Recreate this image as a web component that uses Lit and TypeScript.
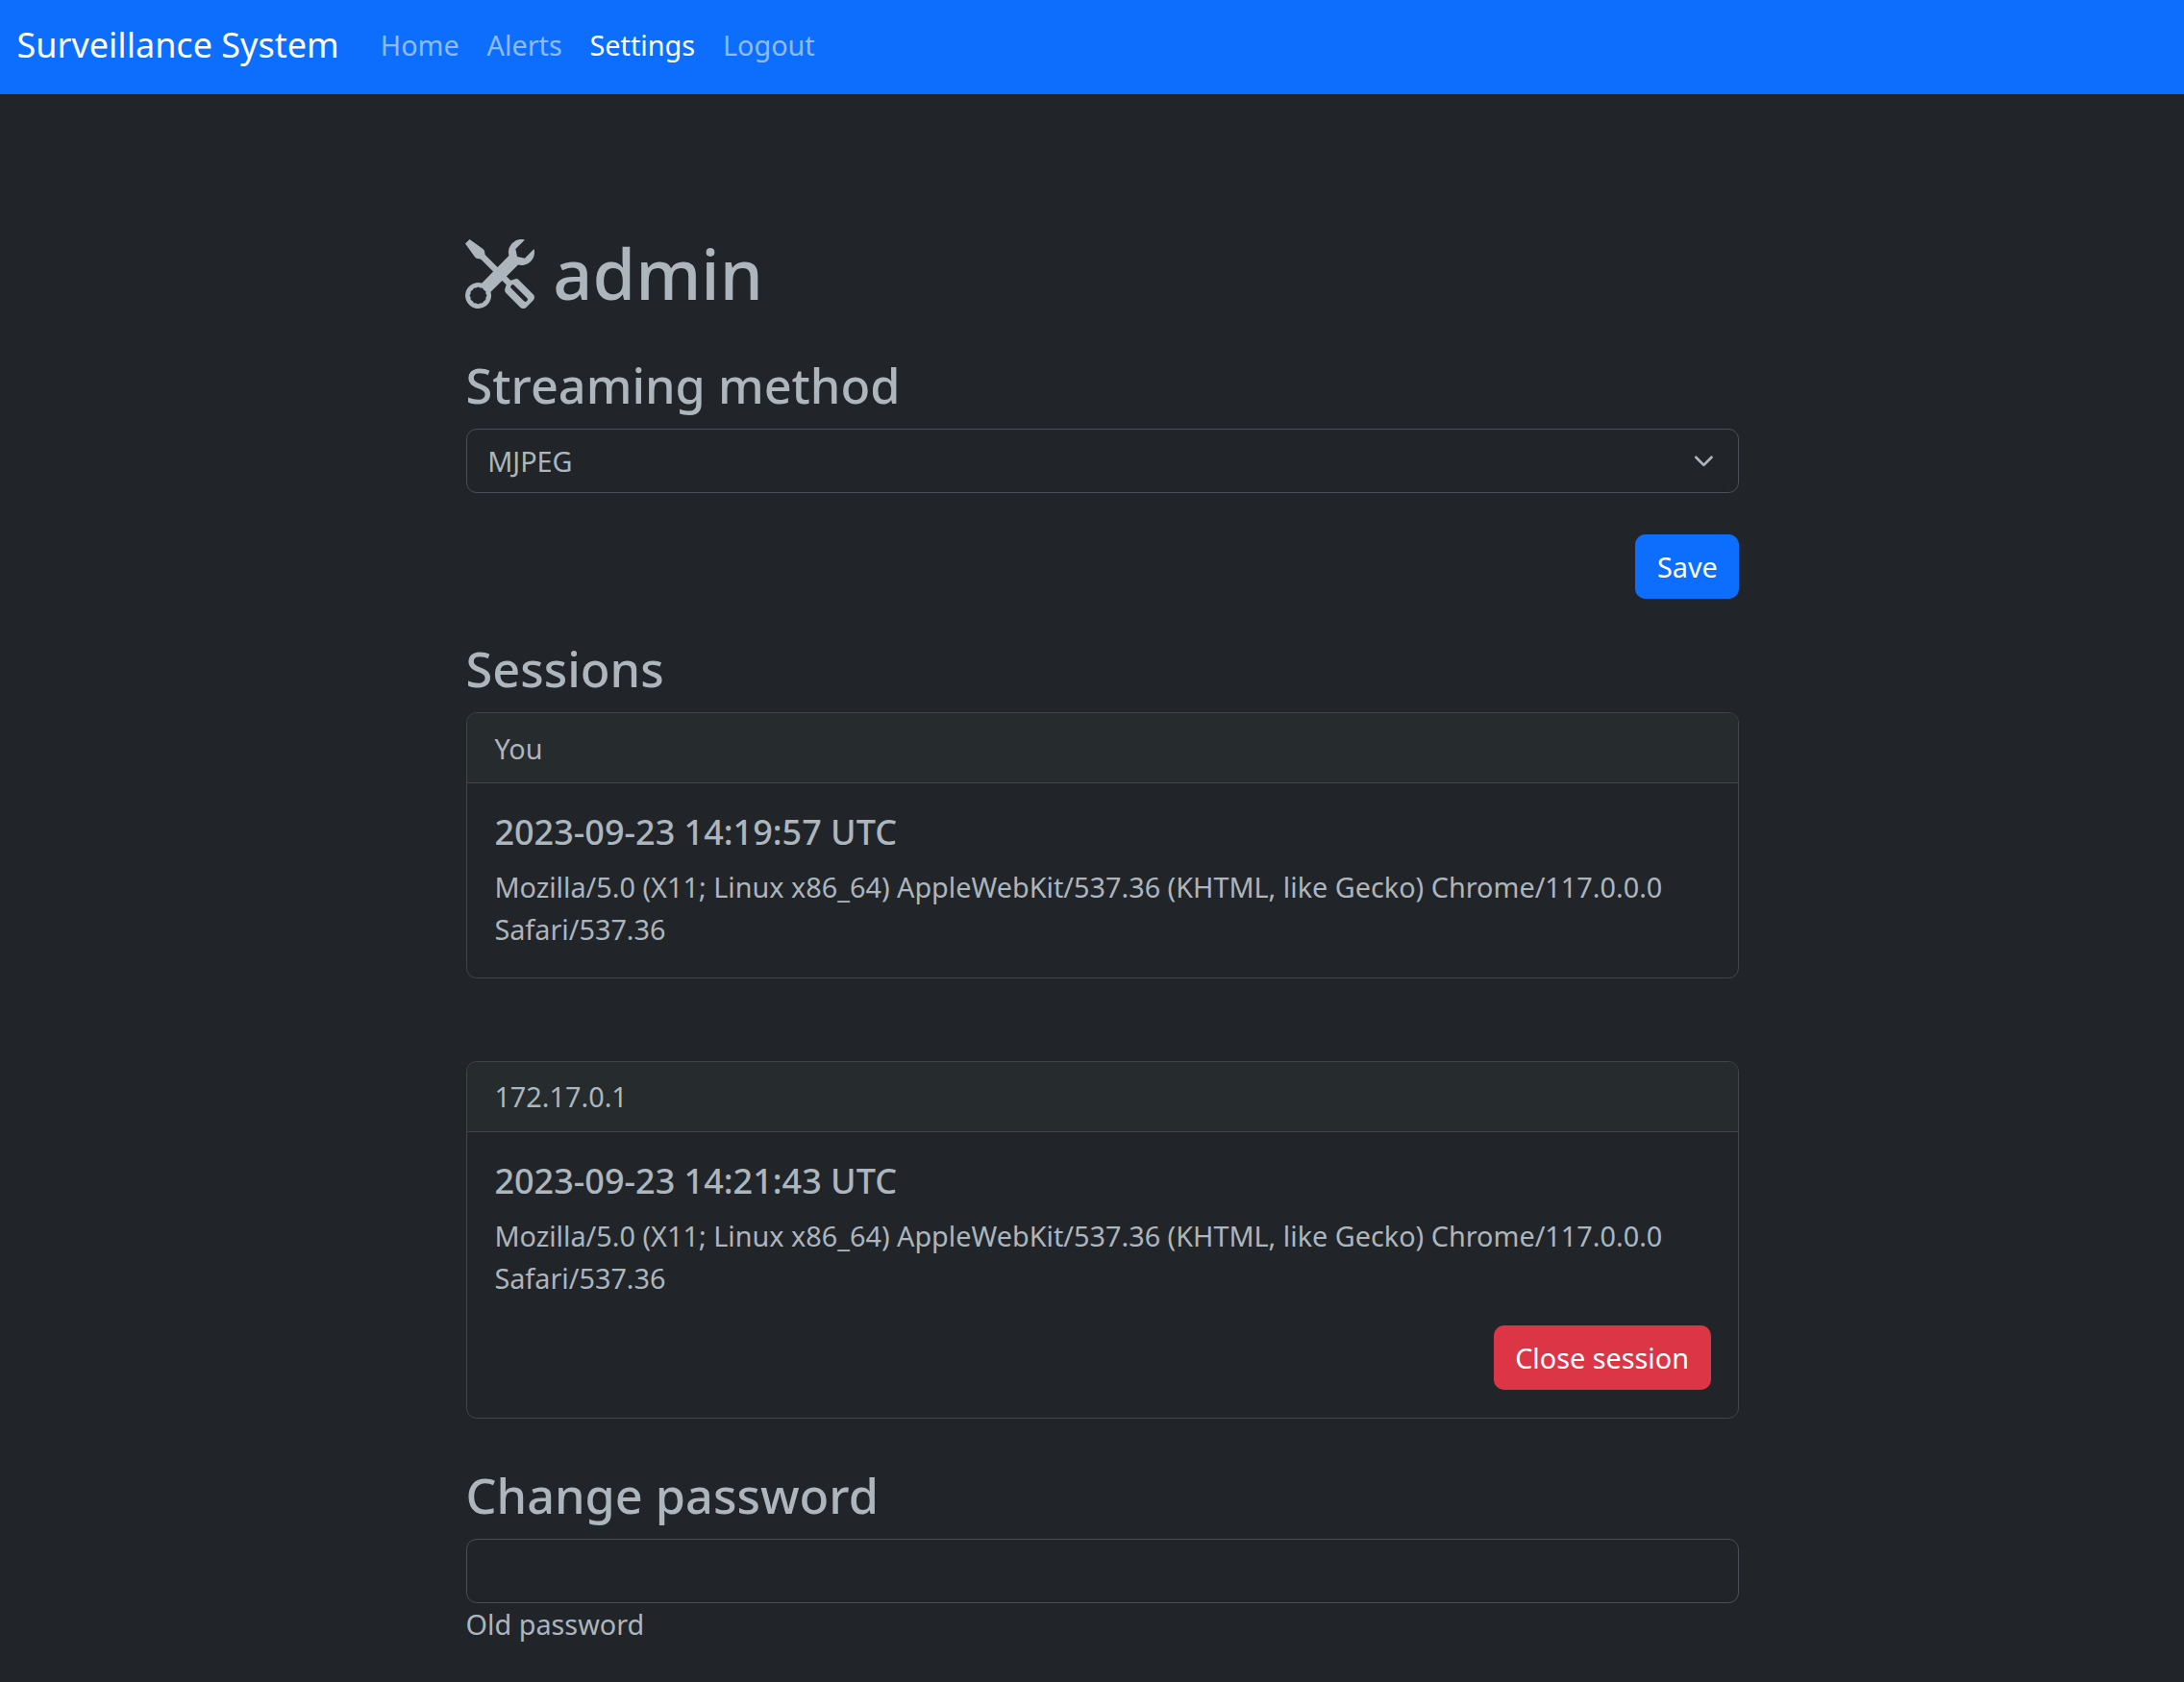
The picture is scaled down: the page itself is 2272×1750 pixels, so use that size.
import { LitElement, html, css, nothing } from "lit";
import { customElement, property } from "lit/decorators.js";

const shared = css`
  * { box-sizing: border-box; }
  .btn {
    border: 1px solid transparent;
    border-radius: 10.8px;
    padding: 10.8px 21.6px;
    font: inherit;
    line-height: 43.2px;
    color: #fff;
    display: block;
  }
  .primary { background: #0d6efd; }
  .danger { background: #dc3545; }
  .actions { display: flex; justify-content: flex-end; }
`;

@customElement("session-card")
class SessionCard extends LitElement {
  @property() origin = "";
  @property() started = "";
  @property() agent = "";
  @property({ type: Boolean }) closable = false;

  static styles = [shared, css`
    :host { display: block; }
    .card {
      border: 1px solid #424649;
      border-radius: 10.8px;
      overflow: hidden;
    }
    .head {
      padding: 14.4px 28.8px;
      background: #262b2e;
      border-bottom: 1px solid #424649;
    }
    .body { padding: 28.8px; }
    .title {
      margin: 0 0 14.4px;
      font-size: 36px;
      font-weight: 500;
      line-height: 1.2;
    }
    .text { margin: 0; }
    .actions { margin-top: 28.2px; }
  `];

  render() {
    return html`
      <div class="card">
        <div class="head">${this.origin}</div>
        <div class="body">
          <h5 class="title">${this.started}</h5>
          <p class="text">${this.agent}</p>
          ${this.closable
            ? html`<div class="actions"><button class="btn danger">Close session</button></div>`
            : nothing}
        </div>
      </div>`;
  }
}

@customElement("app-root")
class AppRoot extends LitElement {
  static styles = [shared, css`
    :host {
      display: block;
      height: 1750px;
      overflow: hidden;
      background: #212529;
      color: #adb5bd;
      font: 400 28.8px/1.5 "Noto Sans", sans-serif;
    }
    .navbar {
      display: flex;
      align-items: center;
      height: 98px;
      padding: 0 17.6px 4px;
      background: #0d6efd;
    }
    .brand { font-size: 36px; color: #fff; margin-right: 43.2px; }
    .nav { display: flex; gap: 28.8px; }
    .link { color: rgba(255, 255, 255, 0.55); }
    .active { color: #fff; }
    .main { width: 1324.8px; margin: 143.3px 0 0 484.6px; }
    .page-title {
      margin: 0 0 43.7px;
      font-size: 72px;
      font-weight: 500;
      line-height: 86.4px;
      white-space: pre;
    }
    .tools { width: 72px; height: 72px; margin: 0 0.6px 0 -0.6px; vertical-align: -9px; }
    .heading {
      margin: 0 0 14.4px;
      font-size: 50.4px;
      font-weight: 500;
      line-height: 1.2;
    }
    .control {
      display: flex;
      align-items: center;
      justify-content: space-between;
      width: 100%;
      height: 66.8px;
      padding: 0 21.6px;
      border: 1px solid #495057;
      border-radius: 10.8px;
    }
    .chevron { width: 28.8px; height: 21.6px; }
    .save { margin: 43.2px 0; }
    .second { margin-top: 86.4px; }
    .password { margin-top: 50.4px; }
  `];

  private links = ["Home", "Alerts", "Settings", "Logout"];
  private agent =
    "Mozilla/5.0 (X11; Linux x86_64) AppleWebKit/537.36 (KHTML, like Gecko) Chrome/117.0.0.0 Safari/537.36";

  render() {
    return html`
      <nav class="navbar">
        <span class="brand">Surveillance System</span>
        <div class="nav">
          ${this.links.map((l) => html`<a class="link ${l === "Settings" ? "active" : ""}">${l}</a>`)}
        </div>
      </nav>
      <main class="main">
        <h1 class="page-title"><svg class="tools" viewBox="0 0 16 16" fill="currentColor"><path d="M1 0 0 1l2.2 3.081a1 1 0 0 0 .815.419h.07a1 1 0 0 1 .708.293l2.675 2.675-2.617 2.654A3.003 3.003 0 0 0 0 13a3 3 0 1 0 5.878-.851l2.654-2.617.968.968-.305.914a1 1 0 0 0 .242 1.023l3.27 3.27a.997.997 0 0 0 1.414 0l1.586-1.586a.997.997 0 0 0 0-1.414l-3.27-3.27a1 1 0 0 0-1.023-.242L10.5 9.5l-.96-.96 2.68-2.643A3.005 3.005 0 0 0 16 3q0-.405-.102-.777l-2.14 2.141L12 4l-.364-1.757L13.777.102a3 3 0 0 0-3.675 3.68L7.462 6.46 4.793 3.793a1 1 0 0 1-.293-.707v-.071a1 1 0 0 0-.419-.814zm9.646 10.646a.5.5 0 0 1 .708 0l2.914 2.915a.5.5 0 0 1-.707.707l-2.915-2.914a.5.5 0 0 1 0-.708M3 11l.471.242.529.026.287.445.445.287.026.529L5 13l-.242.471-.026.529-.445.287-.287.445-.529.026L3 15l-.471-.242L2 14.732l-.287-.445L1.268 14l-.026-.529L1 13l.242-.471.026-.529.445-.287.287-.445.529-.026z"/></svg> admin</h1>

        <h3 class="heading">Streaming method</h3>
        <div class="control">
          <span>MJPEG</span>
          <svg class="chevron" viewBox="0 0 16 16"><path d="m2 5 6 6 6-6" fill="none" stroke="#adb5bd" stroke-width="2" stroke-linecap="round" stroke-linejoin="round"/></svg>
        </div>
        <div class="actions save"><button class="btn primary">Save</button></div>

        <h3 class="heading">Sessions</h3>
        <session-card origin="You" started="2023-09-23 14:19:57 UTC" .agent=${this.agent}></session-card>
        <session-card class="second" origin="172.17.0.1" started="2023-09-23 14:21:43 UTC" .agent=${this.agent} closable></session-card>

        <h3 class="heading password">Change password</h3>
        <div class="control"></div>
        <div>Old password</div>
      </main>`;
  }
}
